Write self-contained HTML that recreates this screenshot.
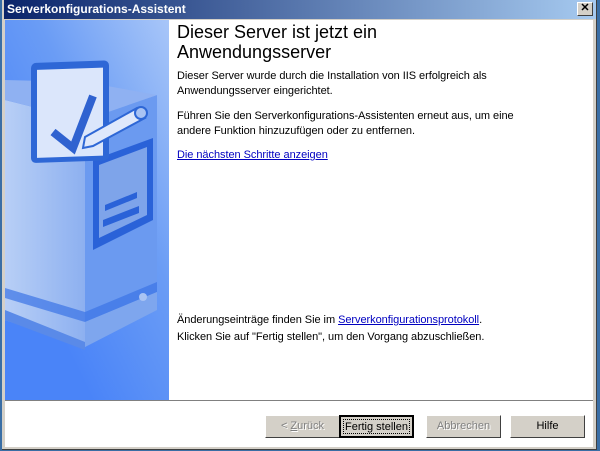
<!DOCTYPE html>
<html><head><meta charset="utf-8"><style>
body{margin:0;width:600px;height:451px;overflow:hidden;background:#3a6ea5;font-family:"Liberation Sans",Tahoma,sans-serif;position:relative}
.win{position:absolute;left:2px;top:0;width:594px;height:449px;background:#d4d0c8;border-right:1px solid #404040;border-bottom:1px solid #404040}
.title{position:absolute;left:2px;top:0;width:592px;height:19px;background:linear-gradient(90deg,#0a246a,#a6caf0);color:#fff;font-weight:bold;font-size:12px;line-height:19px;padding-left:3px;box-sizing:border-box}
.close{position:absolute;right:3px;top:2px;width:16px;height:14px;background:#d4d0c8;border:1px solid;border-color:#fff #404040 #404040 #fff;box-sizing:border-box;font-size:11px;line-height:11px;text-align:center;color:#000}
.client{position:absolute;left:3px;top:20px;width:588px;height:427px;background:#fff}
.panel{position:absolute;left:0;top:0;width:164px;height:380px;overflow:hidden}
.sep{position:absolute;left:0;top:380px;width:588px;height:1px;background:#808080;border-bottom:1px solid #fff}
.h{position:absolute;left:172px;top:2px;font-size:18px;line-height:20px;color:#000}
.t{position:absolute;left:172px;font-size:11px;line-height:15px;color:#000;letter-spacing:-0.05px}
a{color:#0000c0;text-decoration:underline}
.btn{position:absolute;top:395px;width:75px;height:23px;background:#d4d0c8;border:1px solid;border-color:#fff #404040 #404040 #fff;box-sizing:border-box;font-size:11px;text-align:center;line-height:21px;color:#000}
.dis{color:#808080;text-shadow:1px 1px #fff}
</style></head><body>
<div class="win">
<div class="title">Serverkonfigurations-Assistent<div class="close">✕</div></div>
<div class="client">
<div class="panel">
<svg width="164" height="380" viewBox="0 0 164 380">
<defs><linearGradient id="bg" x1="1" y1="0" x2="0.3" y2="0.8"><stop offset="0" stop-color="#a8c6f8"/><stop offset="0.5" stop-color="#6a9cf5"/><stop offset="1" stop-color="#4a84f8"/></linearGradient>
<linearGradient id="side" x1="0" y1="0" x2="1" y2="0"><stop offset="0" stop-color="#b8cff6"/><stop offset="1" stop-color="#8db0f0"/></linearGradient></defs>
<rect width="164" height="380" fill="url(#bg)"/>
<polygon points="0,80 80,100 80,327 0,300" fill="url(#side)"/>
<polygon points="80,100 152,75 152,290 80,327" fill="#6b9af0"/>
<polygon points="0,80 80,100 152,75 80,62 0,60" fill="#8fb1f2"/>
<polygon points="0,268 80,292 152,262 152,272 80,302 0,278" fill="#3a74e6" opacity="0.7"/>
<polygon points="80,302 152,272 152,290 80,327" fill="#7ea6ee"/>
<polygon points="0,290 80,322 80,330 0,300" fill="#5a8ae8"/>
<circle cx="138" cy="277" r="4" fill="#a9c3f3"/>
<polygon points="88,140 148,118 148,200 88,230" fill="#2a62d8"/>
<polygon points="94,145 142,127 142,195 94,218" fill="#7ea4ea"/>
<polygon points="100,185 132,172 132,178 100,191" fill="#2a62d8"/>
<polygon points="98,200 134,186 134,193 98,207" fill="#2a62d8"/>
<rect x="26" y="44" width="78" height="100" rx="5" fill="#2e67d6" transform="skewY(-2)"/>
<rect x="32" y="51" width="66" height="88" fill="#dbe6fb" transform="skewY(-2)"/>
<polyline points="48,112 68,128 88,76" fill="none" stroke="#2f62d0" stroke-width="8"/>
<polygon points="80,117 132,88 140,98 88,126 78,128" fill="#dfe8fb" stroke="#2e67d6" stroke-width="2"/>
<circle cx="136" cy="93" r="6" fill="#a9c3f3" stroke="#2e67d6" stroke-width="2"/>
</svg>
</div>
<div class="h">Dieser Server ist jetzt ein<br>Anwendungsserver</div>
<div class="t" style="top:49px">Dieser Server wurde durch die Installation von IIS erfolgreich als<br>Anwendungsserver eingerichtet.</div>
<div class="t" style="top:89px">Führen Sie den Serverkonfigurations-Assistenten erneut aus, um eine<br>andere Funktion hinzuzufügen oder zu entfernen.</div>
<div class="t" style="top:128px"><a>Die nächsten Schritte anzeigen</a></div>
<div class="t" style="top:293px">Änderungseinträge finden Sie im <a>Serverkonfigurationsprotokoll</a>.</div>
<div class="t" style="top:310px">Klicken Sie auf "Fertig stellen", um den Vorgang abzuschließen.</div>
<div class="sep"></div>
<div class="btn dis" style="left:260px">&lt; <u>Z</u>urück</div>
<div class="btn" style="left:334px;border:2px solid #000;outline:1px dotted #000;outline-offset:-5px">Fertig stellen</div>
<div class="btn dis" style="left:421px">Abbrechen</div>
<div class="btn" style="left:505px">Hilfe</div>
</div>
</div>
</body></html>
